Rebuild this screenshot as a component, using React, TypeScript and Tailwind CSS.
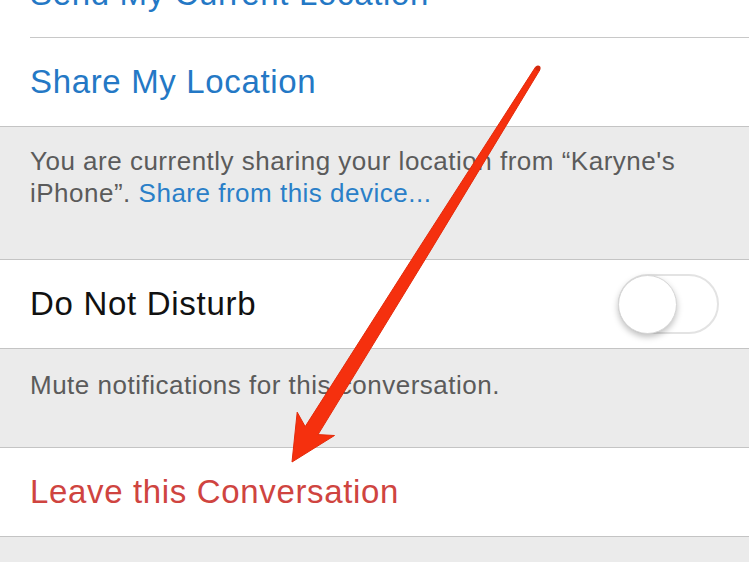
import React from "react";

const font = { fontFamily: '"Liberation Sans", Arial, sans-serif' };

function Row({ children, className = "" }: { children: React.ReactNode; className?: string }) {
  return (
    <div className={`h-[88px] flex items-center pl-[30px] pr-[30px] ${className}`}>{children}</div>
  );
}

// centerline from (538,68) to tip (292,462); u = (-0.5296, 0.8482), n = (0.8482, 0.5296)
function pt(d: number, w: number): string {
  const cx = 292 + 0.5296 * d;
  const cy = 462 - 0.8482 * d;
  return `${(cx + w * 0.8482).toFixed(1)},${(cy + w * 0.5296).toFixed(1)}`;
}

function Arrow() {
  const points = [
    pt(0, 0),
    pt(45, 22),
    pt(37, 7.5),
    pt(250, 5.5),
    pt(464, 2.6),
    pt(464, -2.6),
    pt(250, -5.5),
    pt(37, -7.5),
    pt(45, -22),
  ].join(" ");
  return (
    <svg className="absolute left-0 top-0 pointer-events-none" width={749} height={562} viewBox="0 0 749 562">
      <polygon points={points} fill="#f5300e" stroke="#e32b0b" strokeWidth={1} strokeLinejoin="round" />
      <circle cx={538} cy={68} r={2.6} fill="#d2280c" />
    </svg>
  );
}

export default function App() {
  return (
    <div className="relative w-[749px] h-[562px] overflow-hidden bg-[#ebebeb]" style={font}>
      <div className="bg-white">
        <div className="-mt-[50px] ml-[30px] h-[88px] flex items-center border-b border-[#c8c8c8]">
          <span className="text-[33px] tracking-[0.65px] text-[#2478c5]">Send My Current Location</span>
        </div>
        <Row>
          <span className="text-[33px] tracking-[0.65px] text-[#2478c5]">Share My Location</span>
        </Row>
      </div>
      <div className="border-t border-[#c4c4c4] h-[133px] pl-[30px] pr-[30px] pt-[18px] text-[26px] leading-[32px] tracking-[0.5px] text-[#5b5b5b]">
        You are currently sharing your location from “Karyne's iPhone”.{" "}
        <span className="text-[#2a7fc8]">Share from this device...</span>
      </div>
      <div className="bg-white border-t border-b border-[#c4c4c4]">
        <Row className="justify-between pr-[30px]">
          <span className="text-[33px] tracking-[0.7px] text-[#111]">Do Not Disturb</span>
          <div className="relative w-[101px] h-[60px] rounded-full border-2 border-[#e3e3e3] bg-white">
            <div className="absolute left-[-2px] top-[-1px] w-[59px] h-[59px] rounded-full bg-white border border-[#d6d6d6] shadow-[0_3px_6px_rgba(0,0,0,0.25)]" />
          </div>
        </Row>
      </div>
      <div className="h-[98px] pl-[30px] pt-[20px] text-[26px] leading-[32px] tracking-[0.5px] text-[#5b5b5b]">
        Mute notifications for this conversation.
      </div>
      <div className="bg-white border-t border-b border-[#c4c4c4]">
        <Row>
          <span className="text-[33px] tracking-[0.65px] text-[#cf4440]">Leave this Conversation</span>
        </Row>
      </div>
      <Arrow />
    </div>
  );
}
